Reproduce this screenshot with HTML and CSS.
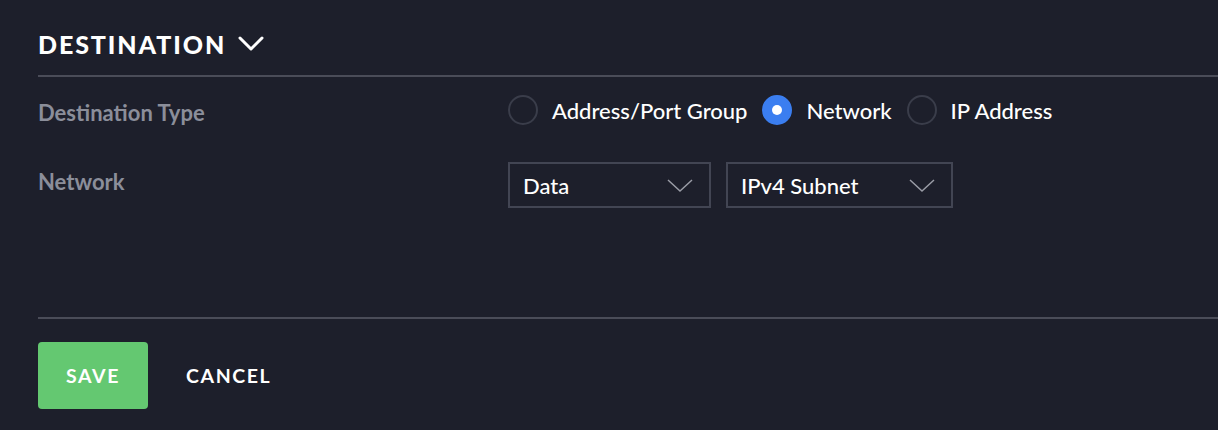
FILE: index.html
```html
<!DOCTYPE html>
<html>
<head>
<meta charset="utf-8">
<link rel="stylesheet" href="styles.css">
</head>
<body>
<div class="panel">
  <div class="section-header">
    <span class="section-title">DESTINATION</span>
    <svg class="title-chevron" width="26" height="16" viewBox="0 0 26 16"><path d="M2 2 L13 13 L24 2" fill="none" stroke="#ffffff" stroke-width="3" stroke-linecap="round" stroke-linejoin="round"/></svg>
  </div>
  <div class="form">
    <div class="row row-type">
      <div class="label">Destination Type</div>
      <div class="radios">
        <label class="radio"><span class="dot"></span><span class="radio-text">Address/Port Group</span></label>
        <label class="radio checked"><span class="dot"></span><span class="radio-text">Network</span></label>
        <label class="radio"><span class="dot"></span><span class="radio-text">IP Address</span></label>
      </div>
    </div>
    <div class="row row-network">
      <div class="label">Network</div>
      <div class="selects">
        <div class="select select-data"><span>Data</span>
          <svg width="26" height="14" viewBox="0 0 26 14"><path d="M1 1 L13 12 L25 1" fill="none" stroke="#9a9ca6" stroke-width="1.5"/></svg>
        </div>
        <div class="select select-subnet"><span>IPv4 Subnet</span>
          <svg width="26" height="14" viewBox="0 0 26 14"><path d="M1 1 L13 12 L25 1" fill="none" stroke="#9a9ca6" stroke-width="1.5"/></svg>
        </div>
      </div>
    </div>
  </div>
  <div class="actions">
    <button class="btn-save">SAVE</button>
    <button class="btn-cancel">CANCEL</button>
  </div>
</div>
</body>
</html>
```

FILE: styles.css
```css
html, body {
  margin: 0;
  padding: 0;
  background: #1d1f2b;
  height: 100%;
}
body {
  font-family: Lato, "Open Sans", sans-serif;
  color: #ffffff;
}
.panel {
  padding-left: 38px;
}
.section-header {
  display: flex;
  align-items: center;
  gap: 12px;
  border-bottom: 2px solid #4a4c58;
  box-sizing: border-box;
  height: 77px;
  padding-top: 12px;
}
.section-title {
  font-size: 25px;
  font-weight: 900;
  letter-spacing: 1.9px;
}
.title-chevron {
  display: block;
}
.form {
  border-bottom: 2px solid #4a4c58;
  box-sizing: border-box;
  height: 242px;
}
.row {
  display: grid;
  grid-template-columns: 470px 1fr;
  align-items: center;
}
.row-type {
  height: 66px;
}
.row-network {
  margin-top: 19px;
  height: 46px;
}
.label {
  font-size: 22px;
  font-weight: 700;
  color: #8b8e9a;
}
.row-type .label {
  padding-top: 4px;
}
.row-network .label {
  margin-top: -8px;
}
.radios {
  display: flex;
  align-items: center;
}
.radio {
  display: flex;
  align-items: center;
  margin-right: 15px;
}
.dot {
  width: 30px;
  height: 30px;
  box-sizing: border-box;
  border: 2px solid #3a3d4a;
  border-radius: 50%;
  margin-right: 14px;
  display: flex;
  align-items: center;
  justify-content: center;
}
.radio.checked .dot {
  background: #3b7ef0;
  border-color: #3b7ef0;
}
.radio.checked .dot::after {
  content: "";
  width: 10px;
  height: 10px;
  border-radius: 50%;
  background: #ffffff;
}
.radio-text {
  font-size: 22px;
  font-weight: 500;
  color: #ffffff;
}
.selects {
  display: flex;
  gap: 15px;
}
.select {
  height: 46px;
  box-sizing: border-box;
  border: 2px solid #424553;
  display: flex;
  align-items: center;
  justify-content: space-between;
  padding: 0 16px 0 13px;
  font-size: 22px;
  font-weight: 500;
}
.select svg {
  display: block;
  margin-top: 2px;
}
.select-data {
  width: 203px;
}
.select-subnet {
  width: 227px;
}
.actions {
  display: flex;
  align-items: center;
  padding-top: 23px;
}
.btn-save {
  width: 110px;
  height: 67px;
  border: none;
  border-radius: 4px;
  background: #64c871;
  color: #ffffff;
  font-family: Lato, sans-serif;
  font-size: 19.5px;
  font-weight: 700;
  letter-spacing: 1.6px;
  cursor: pointer;
}
.btn-cancel {
  margin-left: 26px;
  border: none;
  background: transparent;
  color: #ffffff;
  font-family: Lato, sans-serif;
  font-size: 19.5px;
  font-weight: 700;
  letter-spacing: 1.6px;
  padding: 0 12px;
}
```
